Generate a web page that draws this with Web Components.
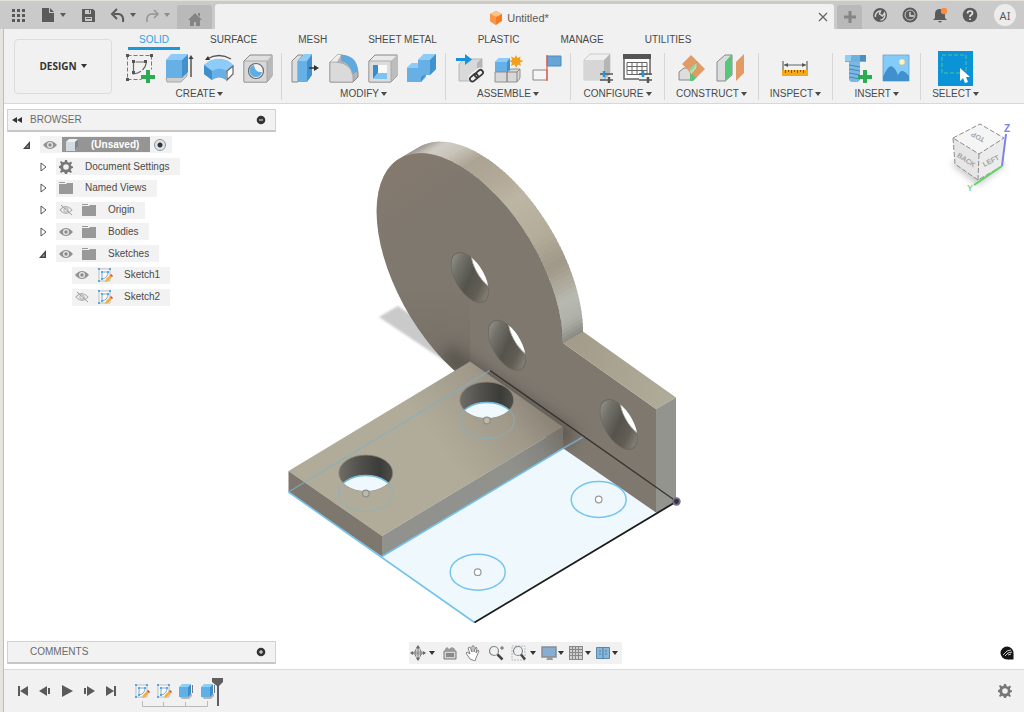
<!DOCTYPE html>
<html lang="en">
<head>
<meta charset="utf-8">
<title>Untitled*</title>
<style>
html, body { margin: 0; height: 100%; }
body { font: 10px/14px "Liberation Sans", Arial, sans-serif; color: #4a4a4a; background: #fff; }
</style>
</head>
<body>
<cad-app></cad-app>
<script>
const define = (name, css, html, setup) => {
  const tpl = document.createElement('template');
  customElements.define(name, class extends HTMLElement {
    constructor() {
      super();
      this.attachShadow({ mode: 'open' });
    }
    connectedCallback() {
      if (this.shadowRoot.childNodes.length) return;
      tpl.innerHTML = `<style>*{box-sizing:border-box}button{font:inherit;color:inherit;background:none;border:0;padding:0;margin:0;display:flex;align-items:center}${css}</style>` +
        (typeof html === 'function' ? html(this) : html);
      this.shadowRoot.append(tpl.content.cloneNode(true));
      if (setup) setup(this);
    }
  });
};

const sketchSmall = '<path d="M2 2h11v12H2z" fill="#f6fafd" stroke="#a9b2b9" stroke-width=".8"/><path d="M5 5h6q0 6-6 7z" fill="none" stroke="#7d9cb8" stroke-width=".9"/><path d="M1 1h2v2H1zM12 1h2v2h-2zM1 13h2v2H1zM4 4h2v2H4zM10 4h2v2h-2zM4 11h2v2H4z" fill="#52aae6"/><path d="M8 15l1-3 4-4 2 2-4 4z" fill="#f5ad3c"/><path d="M13 8l1-1 2 2-1 1z" fill="#d9432f"/>';
const extrudeSmall = '<path d="M2 14l2 2h7l3-3v-2H2z" fill="#b5b5b5"/><path d="M1 4h9v10H1z" fill="#5fb0e6"/><path d="M1 4l3-3h9l-3 3z" fill="#8fcef5"/><path d="M10 4l3-3v10l-3 3z" fill="#3d8fcc"/><path d="M14.500 2v8" stroke="#777" fill="none"/>';
const ICONS = {
  /* 30-unit ribbon icons */
  sketch: [30, '<path d="M1.500 2.500h24M1.500 2.500v24h14M25.500 2.500v14" fill="none" stroke="#777" stroke-dasharray="4 2"/><path d="M7.500 9v12c7-1 12-5 13-12z" fill="none" stroke="#666" stroke-width="1.200" stroke-dasharray="9 2"/><path d="M0 1h3v3H0zM24 1h3v3h-3zM0 25h3v3H0zM6 7h3v3H6zM18 7h3v3h-3zM6 18h3v3H6z" fill="#555"/><path d="M20 17h4v5h5v4h-5v5h-4v-5h-5v-4h5z" fill="#2bab52"/>'],
  extrude: [30, '<path d="M1 25l1 4h14l6-6v-4z" fill="#cfcfcf" stroke="#999" stroke-width=".8"/><path d="M1 7h16v18H1z" fill="#66b0e5"/><path d="M1 7l5-6h17l-6 6z" fill="#8dcbf8"/><path d="M17 7l6-6v18l-6 6z" fill="#4291cc"/><path d="M26 4v20" stroke="#555" stroke-width="1.500"/><path d="M23.500 6L26 2l2.500 4z" fill="#444"/>'],
  revolve: [30, '<path d="M0 12q6-6 15-6 9 0 14 6l-1 2-6 6v7q-7-5-14 0L0 21z" fill="#66b0e5"/><path d="M0 12q6-6 15-6 9 0 14 6l-6 6q-8-5-15 0z" fill="#8dcbf8"/><path d="M0 12l8 6v9l-8-6z" fill="#3f8fca"/><path d="M23 18l6-5v8l-6 6z" fill="#fff" stroke="#666" stroke-width="1.200"/><path d="M3 6q12-7 24 0" fill="none" stroke="#555" stroke-width="1.300"/><path d="M1 7l3-4 2 4z" fill="#333"/>'],
  hole: [30, '<path d="M1 8l6-6h22v21l-5 6H1z" fill="#e0e0e0" stroke="#888"/><path d="M24 8l5-6v21l-5 6z" fill="#b9b9b9"/><path d="M1 8h23v21H1z" fill="#d8d8d8" stroke="#999" stroke-width=".7"/><circle cx="13" cy="18" r="7.500" fill="#f4f4f4" stroke="#666" stroke-width="1.200"/><path d="M11 12A6.200 6.200 0 1 0 19 19q-7 1-8-7z" fill="#5fade2"/>'],
  press: [30, '<path d="M2 8l6-6h5L8 8v21H2z" fill="#dedede" stroke="#888"/><path d="M8 8h9v21H8z" fill="#66b0e5"/><path d="M8 8l6-7h8l-5 7z" fill="#8dcbf8"/><path d="M17 8l5-7v21l-5 7z" fill="#4291cc"/><path d="M19 15h7" stroke="#333" stroke-width="1.500"/><path d="M24 12l5 3-5 3z" fill="#333"/>'],
  fillet: [30, '<path d="M1 9l7-7h5q14 2 16 17v5l-5 5H1z" fill="#b5b5b5" stroke="#888"/><path d="M1 9l7-7h4L8 9z" fill="#eee"/><path d="M1 9h6q15 1 17 14v6H1z" fill="#dadada" stroke="#999" stroke-width=".7"/><path d="M12 2q16 0 17 16l-5 3Q21 10 12 8z" fill="#5fa9df"/>'],
  shell: [30, '<path d="M1 8l6-6h22v21l-6 6H1z" fill="#e9e9e9" stroke="#888"/><path d="M23 8l6-6v21l-6 6z" fill="#bdbdbd"/><path d="M1 8h22v21H1z" fill="#dcdcdc" stroke="#999" stroke-width=".7"/><path d="M5 12h14v14H5z" fill="#fafafa"/><path d="M5 12h5v8l-5 6z" fill="#3a8dcc"/><path d="M10 20h9v6H5z" fill="#7fc3f3"/>'],
  combine: [30, '<path d="M0 15l5-5h6V7l6-6h12v15l-6 6h-4v2l-5 5H0z" fill="#66b0e5"/><path d="M0 15l5-5h6v5zM11 7l6-6h12l-6 6z" fill="#8dcbf8"/><path d="M23 7l6-6v15l-6 6zM14 24l5-3-5 8z" fill="#4291cc"/>'],
  insertComp: [30, '<path d="M5 11l5-5h18v18l-5 4H5z" fill="#d9d9d9" stroke="#aaa" stroke-width=".8"/><path d="M23 10l5-5v18l-5 5z" fill="#b5b5b5"/><path d="M2 5h9V1l7 5.500-7 5.500V8H2z" fill="#1593dc"/><g fill="none" stroke="#f1f1f1" stroke-width="5"><rect x="16" y="22" width="8" height="5" rx="2.500" transform="rotate(-40 20 24)"/><rect x="21" y="18" width="8" height="5" rx="2.500" transform="rotate(-40 25 20)"/></g><g fill="none" stroke="#3a3a3a" stroke-width="1.800"><rect x="15" y="22" width="9" height="5" rx="2.500" transform="rotate(-40 20 24)"/><rect x="20" y="18" width="9" height="5" rx="2.500" transform="rotate(-40 25 20)"/></g>'],
  newComp: [30, '<path d="M2 9l4-4h10v12l-2 2H2z" fill="#66b0e5"/><path d="M2 9l4-4h11l-3 4z" fill="#8dcbf8"/><path d="M14 9l3-4v12l-3 3z" fill="#4291cc"/><path d="M2 19h12v10H2zM14 19l4-3h9v9l-3 4H14z" fill="#d8d8d8" stroke="#888" stroke-width=".9"/><path d="M14 19h10v10M24 19l3-3" fill="none" stroke="#888"/><path d="M23 2l1.500 3 3-1.500L27 7l3.500 1L27 9.500l1 3.500-3-1.500L23 15l-1.500-3.500-3.500 1.500 1-3.500L16 8l3-1-1-3.500 3.500 1.500z" fill="#f2a01c"/>'],
  joint: [30, '<path d="M15 3h14v10H15z" fill="#66a5d6" stroke="#4b8cc0" stroke-width="1"/><path d="M1 17h14v10H1z" fill="#f5f5f5" stroke="#888"/><path d="M15 2v26" stroke="#ee5544" stroke-width="1.300"/>'],
  configure: [30, '<path d="M1 7l6-6h20v19l-6 7H1z" fill="#efefef" stroke="#bbb" stroke-width=".7"/><path d="M21 7l6-6v20l-6 6z" fill="#b5b5b5"/><path d="M1 7h20v20H1z" fill="#d6d6d6"/><path d="M17 21h13M17 27h13" stroke="#555" stroke-width="1.600"/><path d="M21 18v6" stroke="#2196e0" stroke-width="2.500"/><path d="M26 24v6" stroke="#555" stroke-width="2.500"/>'],
  table: [30, '<path d="M2 2h26v24H2z" fill="#fff" stroke="#666" stroke-width="1.500"/><path d="M1 1h28v5H1z" fill="#555"/><path d="M5 9.500h20v12H5zM5 13.500h20M5 17.500h20M10 9.500v12M15 9.500v12M20 9.500v12" fill="none" stroke="#666"/><path d="M17 22h13v8H17z" fill="#f1f1f1"/><path d="M17 21h13M17 27h13" stroke="#555" stroke-width="1.600"/><path d="M21 18v6" stroke="#2196e0" stroke-width="2.500"/><path d="M26 24v6" stroke="#555" stroke-width="2.500"/>'],
  plane: [30, '<path d="M2 19l5-4h8l4 4-4 8H2z" fill="#ddd" stroke="#888"/><path d="M13 19h3l4 5-4 4h-3z" fill="#57c57c"/><path d="M14 2l14 14-9 9-14-14z" fill="#e39b66"/><path d="M12 17l8-8v6l-6 7z" fill="#cdd9a7" stroke="#b98754" stroke-width=".6"/><path d="M12 16l7-6-2 5-3 3z" fill="#8ed49d"/>'],
  offset: [30, '<path d="M1 9l8-7h7v20l-7 6H1z" fill="#ddd" stroke="#888"/><path d="M9 9l7-8v20l-7 8z" fill="#57c57c"/><path d="M20 9l8-8v19l-8 8z" fill="#e39b66"/>'],
  measure: [30, '<path d="M3 8v9M27 8v9M4 12h22" stroke="#666" stroke-width="1.200"/><path d="M4 12l4-2v4zM26 12l-4-2v4z" fill="#555"/><path d="M2 17h26v6H2z" fill="#f5a81c"/><path d="M5.500 17v3M8.500 17v2M11.500 17v3M14.500 17v2M17.500 17v3M20.500 17v2M23.500 17v3" stroke="#7d5510"/>'],
  bolt: [30, '<path d="M7 8h11v19l-2 2H9l-2-2z" fill="#78b9e6"/><path d="M7 12l11 2M7 16l11 2M7 20l11 2M7 24l11 2" stroke="#4a86b5"/><path d="M3 2h21v7H3z" fill="#6fb0de"/><path d="M3 2h6v6H3z" fill="#93cdf5"/><path d="M18 2h6v6h-6z" fill="#4b8fc4"/><path d="M21 17h4v5h5v4h-5v5h-4v-5h-5v-4h5z" fill="#2bab52"/>'],
  picture: [30, '<path d="M2 2h26v26H2z" fill="#83cbf9" stroke="#6f9fc0" stroke-width=".8"/><circle cx="21" cy="9" r="3" fill="#fbf2c8" stroke="#dcc87f" stroke-width=".6"/><path d="M2 24q4-10 8-11 4 1 7 9 3-5 5-4 3 1 6 5v5H2z" fill="#3f90cd"/>'],
  select: [35, '<path d="M0 0h35v35H0z" fill="#0a93d6"/><path d="M4 4h24v18H4z" fill="none" stroke="#4fc49a" stroke-dasharray="4 2"/><path d="M22 17v13l3-3 2 5 3-1-2-5h4z" fill="#fff"/>'],
  /* 16-unit icons */
  apps: [16, '<path d="M2 2h3v3H2zM7 2h3v3H7zM12 2h3v3h-3zM2 7h3v3H2zM7 7h3v3H7zM12 7h3v3h-3zM2 12h3v3H2zM7 12h3v3H7zM12 12h3v3h-3z" fill="#5a5a5a"/>'],
  file: [16, '<path d="M2 1h7v5h5v9H2zM10 1l4 4h-4z" fill="#5a5a5a"/>'],
  save: [16, '<path fill-rule="evenodd" d="M2 2h11l2 2v11H2zM5 3v4h6V3zM5 10v4h7v-4z" fill="#5a5a5a"/><path d="M9 3h1v3H9zM6 11h5v1H6z" fill="#5a5a5a"/>'],
  undo: [16, '<path d="M4 7h5q5 1 4 8" fill="none" stroke="#5a5a5a" stroke-width="2"/><path d="M7 2L2 7l5 5" fill="none" stroke="#5a5a5a" stroke-width="2"/>'],
  redo: [16, '<path d="M13 7H7q-5 1-4 8" fill="none" stroke="#959595" stroke-width="1.500"/><path d="M10 3l4 4-4 4" fill="none" stroke="#959595" stroke-width="1.500"/>'],
  home: [16, '<path d="M8 2l7 7h-2v6H9v-4H7v4H3V9H1zM11 2h2v4l-2-2z" fill="#848484"/>'],
  cube: [14, '<path d="M7 0l6 3v7l-6 4-6-4V3z" fill="#f67a22"/><path d="M7 0l6 3-6 3-6-3z" fill="#fcc48a"/><path d="M1 3l6 3v8l-6-4z" fill="#f9964a"/>'],
  close: [16, '<path d="M4 4l8 8M12 4l-8 8" stroke="#666" stroke-width="1.300"/>'],
  plus: [16, '<path d="M8 2v12M2 8h12" stroke="#858585" stroke-width="3"/>'],
  ext: [16, '<circle cx="8" cy="8" r="7" fill="#5a5a5a"/><path d="M3.500 10a5 5 0 0 1 5-6l-1 3 3 2 2-3a5 5 0 0 1-4 7" fill="none" stroke="#d2d2d2" stroke-width="1.500"/>'],
  clock: [16, '<circle cx="8" cy="8" r="7.500" fill="#5a5a5a"/><circle cx="8" cy="8" r="5" fill="none" stroke="#cacaca"/><path d="M8 5v4h4" fill="none" stroke="#ddd" stroke-width="1.300"/>'],
  bell: [16, '<path d="M1 13l2-2V7q0-5 5-5t5 5v4l2 2zM6 14h4q-2 3-4 0z" fill="#5a5a5a"/><circle cx="12" cy="4" r="3.200" fill="#f98b45"/>'],
  help: [16, '<circle cx="8" cy="8" r="7.300" fill="#5a5a5a"/><path d="M5.500 6.500q0-2.500 2.500-2.500t2.500 2q0 1.500-1.500 2-1 .5-1 2M8 11.500v1.500" fill="none" stroke="#e6e6e6" stroke-width="1.700"/>'],
  rewind: [12, '<path d="M6 3v6L1 6zM11 3v6L6 6z" fill="#333"/>'],
  minus: [12, '<circle cx="6" cy="6" r="4.300" fill="#333"/><path d="M4 6h4" stroke="#eee"/>'],
  add: [12, '<circle cx="6" cy="6" r="4.300" fill="#333"/><path d="M4 6h4M6 4v4" stroke="#eee"/>'],
  eye: [14, '<path d="M0 7q7-8 14 0-7 8-14 0z" fill="#929292"/><circle cx="7" cy="7" r="3" fill="#e8e8e8"/><circle cx="7" cy="7" r="1.700" fill="#8a8a8a"/>'],
  eyeOff: [14, '<path d="M1 7q6-7 12 0-6 7-12 0z" fill="none" stroke="#aaa" stroke-width="1.100"/><circle cx="7" cy="7" r="2.200" fill="none" stroke="#aaa"/><path d="M2 2l11 10" stroke="#999"/>'],
  folder: [16, '<path d="M1 2h6v1H1zM1 4h7l1-1h6v11H1z" fill="#999"/>'],
  gear: [16, '<path fill-rule="evenodd" d="M7 1h2l.5 2 1.500.7L13 2.500 14 4l-1.200 1.700.5 1.300 1.700.5v1.500l-1.700.5-.6 1.500L14 13l-1.200 1-1.800-1.200-1.500.7L9 15H7l-.5-1.500-1.500-.7L3 14l-1-1.200 1.200-1.800-.7-1.500L1 9V7l1.500-.5.7-1.500L2 3.200 3 2l2 1.200L6.500 3zM8 5.200a2.800 2.800 0 1 0 0 5.600 2.800 2.800 0 0 0 0-5.600z" fill="#777"/>'],
  part: [16, '<path d="M2 5l3-3h9v8l-3 4H2z" fill="#eef1f4"/><path d="M11 5l3-3v8l-3 4z" fill="#7d858d"/><path d="M2 5h9v9H2z" fill="#d3dae1"/>'],
  sk: [16, sketchSmall],
  ex: [16, extrudeSmall],
  open: [10, '<path d="M8 1v8H1z" fill="#444"/><path d="M6.500 5v2.500H4z" fill="#aaa"/>'],
  shut: [10, '<path d="M3 1l5 4-5 4z" fill="#fff" stroke="#555"/>'],
  orbit: [16, '<path d="M8 1v14M1 8h14" stroke="#777"/><path d="M6 3l2-3 2 3zM6 13l2 3 2-3zM3 6L0 8l3 2zM13 6l3 2-3 2z" fill="#666"/><ellipse cx="8" cy="8" rx="3" ry="5" fill="none" stroke="#777"/><ellipse cx="8" cy="8" rx="5" ry="2" fill="none" stroke="#999"/>'],
  look: [16, '<path d="M2 6h12v8H2z" fill="#d4d4d4" stroke="#777"/><path d="M3 4l2-2 2 2 3-2 3 2v2H3z" fill="#999"/><path d="M4 8h8v4H4z" fill="#8a8a8a"/>'],
  hand: [16, '<path d="M5 14L1 8l1-1 3 2-2-6 2-1 2 5V1h2v6l2-5 1 1-1 5 2-3 1 1-3 7-1 3z" fill="#fff" stroke="#777" stroke-width=".9"/>'],
  zoom: [16, '<circle cx="6" cy="6" r="4.500" fill="#eef2f5" stroke="#888" stroke-width="1.200"/><path d="M9.500 9.500l5 5" stroke="#444" stroke-width="2.500"/><path d="M12 3h4M14 1v4" stroke="#666"/>'],
  zoomWin: [16, '<path d="M1 1h13v14H1z" fill="none" stroke="#bbb" stroke-dasharray="2 1"/><circle cx="7" cy="6" r="4.500" fill="#eef2f5" stroke="#888" stroke-width="1.200"/><path d="M10 9.500l4 5" stroke="#444" stroke-width="2.500"/>'],
  monitor: [16, '<path d="M1 2h14v10H1z" fill="#84aed4" stroke="#8c8c8c" stroke-width="1.500"/><path d="M7 12h4l1 3H5z" fill="#999"/>'],
  grid: [16, '<path d="M1 1h14v14H1z" fill="#cfcfcf"/><path d="M1.500 1v14M4.500 1v14M7.500 1v14M10.500 1v14M14.500 1v14M1 1.500h14M1 4.500h14M1 7.500h14M1 10.500h14M1 14.500h14" stroke="#888"/>'],
  views: [16, '<path d="M1.500 2.500h13v11h-13z" fill="#86b6de" stroke="#5e86a8"/><path d="M8 2v12M4 6h2M10 6h2M4 9h2M10 9h2" stroke="#4e7698" stroke-width=".9"/>'],
  first: [16, '<path d="M3 3h2v10H3zM13 3v10L5 8z" fill="#5a5a5a"/>'],
  prev: [16, '<path d="M10 3v10L2 8zM11 5h2v6h-2z" fill="#5a5a5a"/>'],
  play: [16, '<path d="M3 2l11 6-11 6z" fill="#5a5a5a"/>'],
  next: [16, '<path d="M6 3v10l8-5zM3 5h2v6H3z" fill="#5a5a5a"/>'],
  last: [16, '<path d="M13 3h-2v10h2zM3 3v10l8-5z" fill="#5a5a5a"/>'],
  assistant: [14, '<circle cx="7" cy="7" r="6.500" fill="#161616"/><path d="M8 8h5.500v5.500H8z" fill="#161616"/><path d="M3 9l4-4 4-1M5 10l3-3 4-1M8 9l3-1" fill="none" stroke="#ccc" stroke-width="1"/>']
};

define('ui-icon', ':host{display:inline-flex;flex:none}svg{display:block}', el => {
  const [n, art] = ICONS[el.getAttribute('name')];
  const size = el.getAttribute('size') || n;
  return `<svg width="${size}" height="${size}" viewBox="0 0 ${n} ${n}" aria-hidden="true">${art}</svg>`;
});

define('ui-caret', ':host{display:inline-block;flex:none;border:3px solid transparent;border-top:4px solid currentColor;border-bottom:0}', '');

define('tool-button', `
:host{display:flex;flex:none}
button{gap:var(--caret-gap,4px)}`,
  el => `<button aria-label="${el.getAttribute('label')}"><ui-icon name="${el.getAttribute('icon')}"></ui-icon>${el.hasAttribute('menu') ? '<ui-caret></ui-caret>' : ''}</button>`);

define('title-bar', `
:host{display:flex;align-items:flex-end;height:29px;background:#cacaca;border-top:1px solid #e4e2d8;color:#5a5a5a}
nav{display:flex;align-items:center;height:28px;padding-left:10px;gap:14px}
.hist{display:flex;gap:8px;margin-right:7px;--caret-gap:4px}
.redo{color:#8d8d8d}
.side{height:24px;background:#b9b9b9;border-radius:3px 3px 0 0;justify-content:center}
.home{width:35px;padding-top:3px;margin-right:3px}
.new{width:25px;margin-left:3px}
.doc{flex:1;display:flex;align-items:center;height:25px;padding:0 3px 0 8px;background:#f1f1f1;border-radius:3px 3px 0 0}
.name{flex:1;display:flex;justify-content:center;align-items:center;gap:4px;font-size:11px;padding-top:2px}
.right{padding:0 8px 0 10px}
.avatar{width:22px;height:22px;margin-left:2px;border-radius:50%;background:#ececec;justify-content:center;font:11px "Noto Sans",sans-serif}`, `
<nav><tool-button icon="apps" label="Data panel"></tool-button><tool-button icon="file" label="File" menu></tool-button><tool-button icon="save" label="Save"></tool-button>
<div class="hist"><tool-button icon="undo" label="Undo" menu></tool-button><tool-button class="redo" icon="redo" label="Redo" menu></tool-button></div></nav>
<button class="side home" aria-label="Home"><ui-icon name="home"></ui-icon></button>
<div class="doc"><div class="name"><ui-icon name="cube"></ui-icon><span>Untitled*</span></div><tool-button icon="close" label="Close"></tool-button></div>
<button class="side new" aria-label="New design"><ui-icon name="plus"></ui-icon></button>
<nav class="right"><tool-button icon="ext" label="Extensions"></tool-button><tool-button icon="clock" label="Job status"></tool-button><tool-button icon="bell" label="Notifications"></tool-button><tool-button icon="help" label="Help"></tool-button><button class="avatar">AI</button></nav>`);

define('ribbon-group', `
:host{display:flex;flex-direction:column;align-items:center;flex:none;gap:4px;height:47px;padding:0 var(--pad,8px);border-right:1px solid #d6d6d6}
:host([last]){border:0}
.icons{display:flex;gap:9px;height:30px;align-items:center}
.label{height:13px;gap:2px}`,
  el => `<div class="icons"><slot></slot></div><button class="label">${el.getAttribute('label')} <ui-caret></ui-caret></button>`);

const tool = (icon, label) => `<tool-button icon="${icon}" label="${label}"></tool-button>`;
define('tool-ribbon', `
:host{display:flex;height:75px;background:#f1f1f1;border-bottom:1px solid #d8d8d8}
.workspace{flex:none;width:98px;height:55px;margin:10px 6px 0 10px;border:1px solid #dcdcdc;border-radius:4px;justify-content:center;gap:4px;padding-bottom:2px;font:700 10px "Open Sans",sans-serif;color:#333}
.main{flex:1;padding-top:3px}
.tabs{display:flex;gap:19px;margin:0 0 3px 10px}
.tabs button{height:18px;padding:0 11px;border-bottom:3px solid transparent}
.tabs .on{color:#2ba1e2;border-color:#1a98d8}
.groups{display:flex}
.wide{--pad:12px}.mid{--pad:11px}.insert{--pad:9px}`, `
<button class="workspace">DESIGN <ui-caret></ui-caret></button>
<div class="main">
<div class="tabs" role="tablist">${['SOLID', 'SURFACE', 'MESH', 'SHEET METAL', 'PLASTIC', 'MANAGE', 'UTILITIES'].map((t, i) => `<button role="tab"${i ? '' : ' class="on" aria-selected="true"'}>${t}</button>`).join('')}</div>
<div class="groups">
<ribbon-group label="CREATE">${tool('sketch', 'Create sketch') + tool('extrude', 'Extrude') + tool('revolve', 'Revolve') + tool('hole', 'Hole')}</ribbon-group>
<ribbon-group label="MODIFY">${tool('press', 'Press pull') + tool('fillet', 'Fillet') + tool('shell', 'Shell') + tool('combine', 'Combine')}</ribbon-group>
<ribbon-group label="ASSEMBLE">${tool('insertComp', 'Insert component') + tool('newComp', 'New component') + tool('joint', 'Joint')}</ribbon-group>
<ribbon-group class="wide" label="CONFIGURE">${tool('configure', 'Configure') + tool('table', 'Configuration table')}</ribbon-group>
<ribbon-group class="mid" label="CONSTRUCT">${tool('plane', 'Midplane') + tool('offset', 'Offset plane')}</ribbon-group>
<ribbon-group class="mid" label="INSPECT">${tool('measure', 'Measure')}</ribbon-group>
<ribbon-group class="insert" label="INSERT">${tool('bolt', 'Insert fastener') + tool('picture', 'Canvas')}</ribbon-group>
<ribbon-group class="mid" label="SELECT" last>${tool('select', 'Select')}</ribbon-group>
</div></div>`);

define('panel-bar', `
:host{display:flex;align-items:center;width:269px;height:23px;padding:0 8px 0 3px;background:#f2f2f2;border:1px solid #d2d2d2;border-bottom:2px solid #c6c6c6;color:#6b6b6b}
.lead{display:flex;width:12px;margin-right:7px}
.title{flex:1}`,
  el => `<div class="lead"><slot name="lead"></slot></div><span class="title"><slot></slot></span><button aria-label="Toggle panel"><ui-icon name="${el.getAttribute('icon')}"></ui-icon></button>`);

define('tree-row', `
:host{display:flex;align-items:center;padding-left:var(--indent,36px)}
.exp{display:flex;width:10px;margin-right:8px}
.chip{display:flex;align-items:center;height:17px;padding:0 10px 0 2px;background:#f2f2f2}
.eye{width:14px;margin:0 8px 0 1px}
.text{margin-left:11px}
.root{display:flex;align-items:center;height:15px;width:88px;background:#959595;color:#fff;font-weight:700;padding-left:2px}
:host([root]) .eye{margin-right:5px}
:host([root]) .chip{padding-right:6px}
input{appearance:none;width:12px;height:12px;margin:0 0 0 4px;border-radius:50%;border:1px solid #8b939b;background:radial-gradient(circle,#333 0 2px,#dfe6ec 3px)}`,
  el => {
    const a = n => el.getAttribute(n);
    const body = `<ui-icon name="${a('icon')}"></ui-icon><span class="text"><slot></slot></span>`;
    return `<div class="exp">${a('state') ? `<ui-icon name="${a('state')}"></ui-icon>` : ''}</div><div class="chip">` +
      (a('eye') ? `<button class="eye" aria-label="Visibility"><ui-icon name="${a('eye')}"></ui-icon></button>` : '') +
      (el.hasAttribute('root') ? `<div class="root">${body}</div><input type="radio" checked aria-label="Activate component">` : body) + '</div>';
  });

define('browser-tree', `
:host{display:grid;grid-auto-rows:1fr;min-height:176px}
.l0{--indent:15px}.l1{--indent:31px}.l2{--indent:47px}`, `
<tree-row class="l0" root state="open" eye="eye" icon="part">(Unsaved)</tree-row>
<tree-row class="l1" state="shut" icon="gear">Document Settings</tree-row>
<tree-row class="l1" state="shut" icon="folder">Named Views</tree-row>
<tree-row class="l1" state="shut" eye="eyeOff" icon="folder">Origin</tree-row>
<tree-row class="l1" state="shut" eye="eye" icon="folder">Bodies</tree-row>
<tree-row class="l1" state="open" eye="eye" icon="folder">Sketches</tree-row>
<tree-row class="l2" eye="eye" icon="sk">Sketch1</tree-row>
<tree-row class="l2" eye="eyeOff" icon="sk">Sketch2</tree-row>`);

/* Rim of the round plate: one strip per few degrees, shaded by its angle. */
const rimStrips = () => {
  const stops = [[221, 120, 114, 105], [232, 172, 168, 159], [242, 208, 205, 197], [253, 201, 197, 187], [265, 172, 163, 147], [280, 178, 169, 152], [292, 190, 182, 164], [310, 178, 172, 153], [324, 160, 152, 136], [332, 172, 169, 155], [340, 184, 186, 176], [350, 174, 176, 168], [360, 133, 132, 125]];
  const pt = d => { const t = d * Math.PI / 180; return [469.8 + 93.2 * Math.cos(t), 277.5 + 65.9 * Math.cos(t) + 105.5 * Math.sin(t)]; };
  let out = '';
  for (let d = 221; d < 360; d += 2) {
    const e = Math.min(d + 3, 360), [x1, y1] = pt(d), [x2, y2] = pt(e);
    const i = stops.findIndex(s => s[0] > d), a = stops[i - 1], b = stops[i], k = (d - a[0]) / (b[0] - a[0]);
    const c = [1, 2, 3].map(j => Math.round(a[j] + (b[j] - a[j]) * k));
    out += `<path d="M${x1} ${y1}L${x1 + 20} ${y1 - 11.5}L${x2 + 20} ${y2 - 11.5}L${x2} ${y2}z" fill="rgb(${c})"/>`;
  }
  return out;
};
const ELL = 'matrix(.187 .132 0 .212';
const plateHole = (x, y, i) => `
<clipPath id="p${i}"><circle r="100" transform="${ELL} ${x} ${y})"/></clipPath>
<circle r="100" transform="${ELL} ${x} ${y})" fill="url(#bore)" stroke="#6d685f" stroke-width="4"/>
<g clip-path="url(#p${i})"><circle r="100" transform="${ELL} ${x + 20} ${y - 11.5})" fill="#fff" stroke="#aaa79d" stroke-width="5"/></g>`;
const blockHole = (x, y, i) => `
<clipPath id="b${i}"><ellipse cx="${x}" cy="${y}" rx="27" ry="18"/></clipPath>
<ellipse cx="${x}" cy="${y}" rx="27" ry="18" fill="url(#well)" stroke="#8f897c" stroke-width=".8"/>
<g clip-path="url(#b${i})"><ellipse cx="${x}" cy="${y + 20.5}" rx="27.500" ry="18" fill="#eff9fd" stroke="#6bbfe8" stroke-width="1.500"/></g>
<ellipse cx="${x}" cy="${y + 20.5}" rx="27.500" ry="18" fill="none" stroke="#7fb4c6" opacity=".75"/>
<circle cx="${x}" cy="${y + 20.5}" r="3.300" fill="#bdb9ab" stroke="#8f8e88" stroke-width="1.200"/>`;
const sketchCircle = (x, y) => `<ellipse cx="${x}" cy="${y}" rx="27.500" ry="18" fill="none" stroke="#76c5ec" stroke-width="1.500"/><circle cx="${x}" cy="${y}" r="3.300" fill="#fff" stroke="#999" stroke-width="1.200"/>`;
const disc = '<circle r="100" transform="matrix(.932 .659 0 1.055 469.8 277.5)"/>';
const arm = '<path d="M470 300L563 343L656 409V512.500L470 384z"/>';

define('model-canvas', ':host{display:block}svg{display:block;width:100%;height:100%}', `
<svg viewBox="4 104 1020 565" role="img" aria-label="Bracket model">
<defs>
<linearGradient id="bore" x1="0" y1=".3" x2="1" y2=".7"><stop offset="0" stop-color="#93938b"/><stop offset=".2" stop-color="#73736b"/><stop offset=".5" stop-color="#55544c"/><stop offset=".75" stop-color="#625d55"/><stop offset="1" stop-color="#8d887d"/></linearGradient>
<linearGradient id="well"><stop offset="0" stop-color="#6f6d66"/><stop offset=".35" stop-color="#54534e"/><stop offset=".75" stop-color="#3b3b39"/><stop offset="1" stop-color="#4f4e4a"/></linearGradient>
<linearGradient id="shade" gradientUnits="userSpaceOnUse" x1="450" y1="290" x2="445" y2="385"><stop offset="0" stop-color="#565148" stop-opacity="0"/><stop offset="1" stop-color="#565148" stop-opacity=".45"/></linearGradient>
<linearGradient id="warm" gradientUnits="userSpaceOnUse" x1="385" y1="165" x2="425" y2="225"><stop offset="0" stop-color="#8a7a6c" stop-opacity=".6"/><stop offset="1" stop-color="#8a7a6c" stop-opacity="0"/></linearGradient>
<linearGradient id="top" gradientUnits="userSpaceOnUse" x1="530" y1="385" x2="440" y2="450"><stop offset="0" stop-color="#8a8275"/><stop offset=".35" stop-color="#a0998a"/><stop offset="1" stop-color="#b1ac9a"/></linearGradient>
<linearGradient id="side" gradientUnits="userSpaceOnUse" x1="563" y1="438" x2="480" y2="488"><stop offset="0" stop-color="#77726b"/><stop offset=".25" stop-color="#858480"/><stop offset=".6" stop-color="#91918c"/><stop offset="1" stop-color="#91928d"/></linearGradient>
<linearGradient id="ledge" gradientUnits="userSpaceOnUse" x1="563" y1="343" x2="676" y2="400"><stop offset="0" stop-color="#a39b8a"/><stop offset="1" stop-color="#b0ac9a"/></linearGradient>
<clipPath id="plate">${disc}${arm}</clipPath>
<filter id="soft" x="-10%" y="-10%" width="120%" height="120%"><feGaussianBlur stdDeviation="1"/></filter>
<filter id="haze" filterUnits="userSpaceOnUse" x="400" y="300" width="220" height="190"><feGaussianBlur stdDeviation="7"/></filter>
</defs>
<path d="M379 317L398 306L440 335L465 372L452 366z" fill="#cacaca" filter="url(#soft)"/>
<path d="M288.500 492L474.500 622.500L676.500 501.500L490 370.500z" fill="#eff9fd"/>
${rimStrips()}
<g fill="#7e786f">${disc}${arm}</g>
<g clip-path="url(#plate)"><path d="M370 145H480V260H370z" fill="url(#warm)"/><path d="M370 280H470V400H370z" fill="url(#shade)" opacity=".6"/><path d="M445 353L572 440" stroke="#4a453d" stroke-width="20" opacity=".6" filter="url(#haze)"/></g>
<path d="M563 343L583 331.500L676 397.500L656 409z" fill="url(#ledge)"/>
<path d="M656 409L676 397.500V501.500L656 513z" fill="#92948d"/>
${plateHole(469.8, 277.5, 1)}${plateHole(507, 345.3, 2)}${plateHole(618.7, 424.5, 3)}
<path d="M470 361.500L288.500 471L382 536L563 427z" fill="url(#top)"/>
<path d="M288.500 471L382 536V556.500L288.500 492z" fill="#7d776e"/>
<path d="M382 536L563 427V448.500L382 556.500z" fill="url(#side)"/>
<path d="M288.500 492L490 370.500" stroke="#7eb0c4" stroke-width="1.200" opacity=".8"/>
<path d="M563 448.500L583 437" stroke="#7ba3bc" stroke-width="1.500"/>
<path d="M490 370.500L676.500 501.500" stroke="#2b2926" stroke-width="1.500" opacity=".85"/>
${blockHole(365.8, 473, 1)}${blockHole(486.8, 400, 2)}
<path d="M288.500 492L474.500 622.500M382 556.500L563 448.500" stroke="#72c2ec" stroke-width="1.600"/>
<path d="M474.500 622.500L676.500 501.500" stroke="#1b1b1b" stroke-width="1.800"/>
${sketchCircle(598.7, 499.5)}${sketchCircle(477.7, 572.2)}
<circle cx="676.500" cy="501.500" r="3.300" fill="#333" stroke="#77698f" stroke-width="1.800"/>
</svg>`);

define('view-cube', ':host{display:block}svg{display:block}', `
<svg width="84" height="85" viewBox="940 115 84 85" role="img" aria-label="View cube">
<defs><filter id="s" x="-30%" y="-30%" width="160%" height="160%"><feGaussianBlur stdDeviation="3"/></filter></defs>
<path d="M951 164L978 186L1006 165L978 150z" fill="#ccc" filter="url(#s)"/>
<path d="M953 138L980 124L1004 138L979 154z" fill="#f5f5f5"/>
<path d="M953 138L979 154L978 180L955 164z" fill="#e6e6e6"/>
<path d="M979 154L1004 138L1002 166L978 180z" fill="#ececec"/>
<path d="M953 138L980 124L1004 138L979 154zM953 138L955 164L978 180L1002 166M979 154L978 180" fill="none" stroke="#8c8c8c" stroke-dasharray="5 2"/>
<path d="M1002 166L1006 134" stroke="#7f80ee" stroke-width="2"/>
<path d="M1002 166L974 185" stroke="#5fd463" stroke-width="2"/>
<g font-family="Liberation Sans, Arial, sans-serif" text-anchor="middle" font-size="7" font-weight="700" fill="#a0a5aa">
<text transform="translate(979 135) rotate(208)">TOP</text>
<text transform="translate(965 162) rotate(33)">BACK</text>
<text transform="translate(992 163) rotate(-28)">LEFT</text>
<text x="1007" y="132" font-size="10" fill="#7f80ee">Z</text>
<text x="970" y="191" font-size="9" fill="#7bd48a">Y</text></g>
</svg>`);

define('nav-bar', `
:host{display:flex;align-items:center;height:22px;padding:0 4px 0 1px;background:#f1f1f1;color:#333;gap:5px}
div{display:flex;gap:7px;--caret-gap:3px}
.display{gap:4px;--caret-gap:1px}`, `
<div><tool-button icon="orbit" label="Orbit" menu></tool-button><tool-button icon="look" label="Look at"></tool-button><tool-button icon="hand" label="Pan"></tool-button><tool-button icon="zoom" label="Zoom"></tool-button><tool-button icon="zoomWin" label="Zoom window" menu></tool-button></div>
<div class="display"><tool-button icon="monitor" label="Display settings" menu></tool-button><tool-button icon="grid" label="Grid and snaps" menu></tool-button><tool-button icon="views" label="Viewports" menu></tool-button></div>`);

define('design-viewport', `
:host{position:relative;display:flex;flex-direction:column;justify-content:space-between;min-height:400px;background:#fff}
model-canvas{position:absolute;inset:0}
.top,.bottom{position:relative;display:flex;justify-content:space-between}
.top{padding:5px 0 0 3px}
.tree{padding-top:2px}
view-cube{margin-top:6px}
.bottom{display:grid;grid-template-columns:1fr auto 1fr;align-items:center;padding:0 0 5px 3px}
.bottom>:last-child{justify-self:end;margin-right:10px}`, `
<model-canvas></model-canvas>
<div class="top"><div><panel-bar icon="minus"><ui-icon slot="lead" name="rewind"></ui-icon>BROWSER</panel-bar><browser-tree class="tree"></browser-tree></div><view-cube></view-cube></div>
<div class="bottom"><panel-bar icon="add">COMMENTS</panel-bar><nav-bar></nav-bar><tool-button icon="assistant" label="Assistant"></tool-button></div>`);

define('time-line', `
:host{display:flex;align-items:center;height:43px;padding:0 11px;background:#f1f1f1;border-top:1px solid #d9d9d9}
.play{display:flex;gap:6px;margin-right:15px}
.steps{position:relative;display:flex;gap:6px;flex:1}
.rail{position:absolute;left:8px;top:17px}
.marker{position:absolute;left:78px;top:-6px}`, `
<div class="play">${tool('first', 'Go to start') + tool('prev', 'Step back') + tool('play', 'Play') + tool('next', 'Step forward') + tool('last', 'Go to end')}</div>
<div class="steps">${tool('sk', 'Sketch1') + tool('sk', 'Extrude sketch') + tool('ex', 'Extrude1') + tool('ex', 'Extrude2')}
<svg class="rail" width="68" height="8" viewBox="0 0 68 8"><path d="M.5 1v5.500h65V1M21.500 2v4M43.500 2v4" fill="none" stroke="#b9b9b9"/></svg>
<svg class="marker" width="12" height="30" viewBox="0 0 12 30"><path d="M0 1h11v4L7 9v20H5V9L0 5z" fill="#5f5f5f"/></svg></div>
${tool('gear', 'Timeline settings')}`);

define('cad-app', `
:host{display:flex;flex-direction:column;min-height:100vh}
.work{flex:1;display:flex;flex-direction:column;border-left:1px solid #bdbdbd;margin-left:3px}
.frame{flex:1;display:flex;flex-direction:column;background:#e6e4dd}
design-viewport{flex:1}`, `
<title-bar></title-bar>
<div class="frame"><main class="work"><tool-ribbon></tool-ribbon><design-viewport></design-viewport><time-line></time-line></main></div>`);
</script>
</body>
</html>
